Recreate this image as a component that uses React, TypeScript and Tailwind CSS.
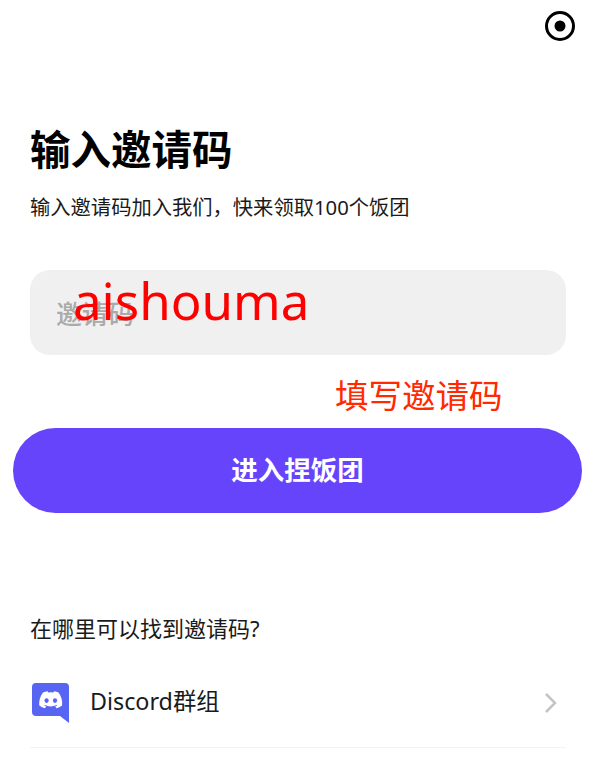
const font = "[font-family:'Noto_Sans','Noto_Sans_CJK_SC',sans-serif]";

function DiscordIcon() {
  return (
    <svg width="38" height="42" viewBox="0 0 38 42" className="shrink-0">
      <path
        d="M4 1h29a4 4 0 0 1 4 4v36l-9-7H4a4 4 0 0 1-4-4V5a4 4 0 0 1 4-4z"
        fill="#5865f2"
      />
      <path
        d="M26.6 10.6a20 20 0 0 0-4.6-1.4l-.6 1.2a18 18 0 0 0-5.2 0l-.6-1.2a20 20 0 0 0-4.6 1.4C7.7 15 6.900 19.200 7.300 23.400a19 19 0 0 0 5.700 2.900l1.200-2a12 12 0 0 1-1.900-.9l.5-.4a13.500 13.500 0 0 0 11.800 0l.5.4a12 12 0 0 1-1.900.9l1.200 2a19 19 0 0 0 5.700-2.900c.5-4.900-.8-9-3.500-12.800z"
        fill="#fff"
      />
      <ellipse cx="14.600" cy="18.600" rx="2.100" ry="2.300" fill="#5865f2" />
      <ellipse cx="23" cy="18.600" rx="2.100" ry="2.300" fill="#5865f2" />
    </svg>
  );
}

export default function App() {
  return (
    <div className={`relative h-[761px] w-[600px] overflow-hidden bg-white ${font}`}>
      <div className="flex justify-end pr-[24px] pt-[10px]">
        <svg width="32" height="32" viewBox="0 0 32 32">
          <circle cx="16" cy="16" r="13.500" fill="none" stroke="#000" strokeWidth="3" />
          <circle cx="16" cy="16" r="5.500" fill="#000" />
        </svg>
      </div>

      <div className="px-[30px] pt-[80px]">
        <h1 className="text-[40.500px] font-bold leading-[56px] text-black">输入邀请码</h1>
        <p className="mt-[15px] text-[20.300px] leading-[28px] text-[#1a1a1a]">
          输入邀请码加入我们，快来领取100个饭团
        </p>
        <div className="mt-[49px] flex h-[85px] w-[536px] items-center rounded-[20px] bg-[#f0f0f0] pl-[26px]">
          <span className="pt-[4px] text-[26px] font-medium text-[#aaaaaa]">邀请码</span>
        </div>
      </div>

      <div className="mx-[13px] mt-[73px] flex h-[85px] w-[569px] items-center justify-center rounded-full bg-[#6544fb]">
        <span className="text-[26.500px] font-bold text-white">进入捏饭团</span>
      </div>

      <div className="px-[30px] pt-[99px]">
        <p className="text-[22px] leading-[32px] text-[#1a1a1a]">在哪里可以找到邀请码?</p>
        <div className="mt-[38px] flex w-[536px] items-center border-b border-[#f3f3f3] pb-[23px] pl-[2px]">
          <DiscordIcon />
          <span className="mb-[4px] ml-[20px] flex-1 text-[23.300px] leading-[36px] text-[#1a1a1a]">Discord群组</span>
          <svg width="14" height="22" viewBox="0 0 14 22" className="mr-[8px]">
            <path d="M2 2l9 9-9 9" fill="none" stroke="#c4c4c4" strokeWidth="2.500" />
          </svg>
        </div>
      </div>

      <span className="absolute left-[73px] top-[268px] text-[51px] leading-[64px] text-[#ff0000]">aishouma</span>
      <span className="absolute left-[335px] top-[372px] text-[33.500px] leading-[46px] text-[#ff2a00]">填写邀请码</span>
    </div>
  );
}
